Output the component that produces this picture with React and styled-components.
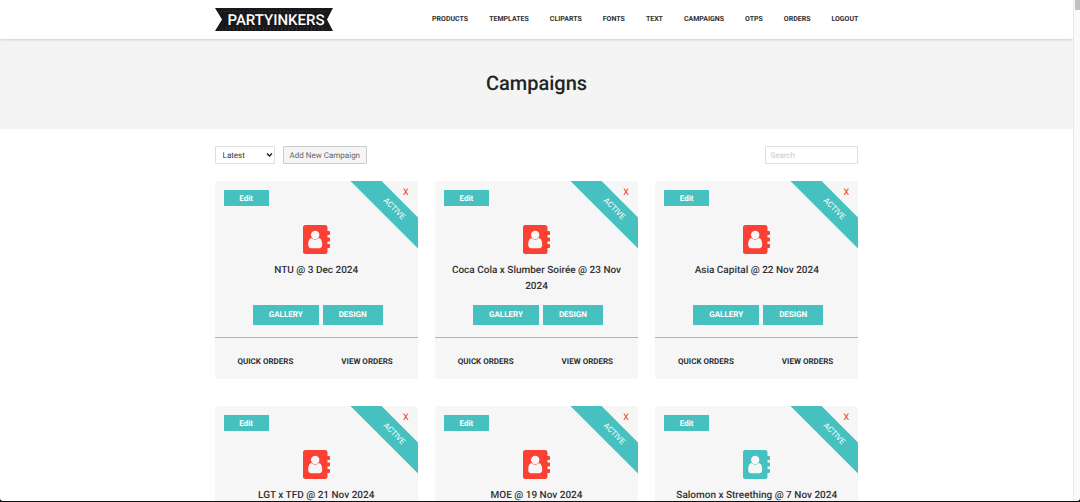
import React from "react";
import styled, {createGlobalStyle} from "styled-components";

const GlobalStyle = createGlobalStyle`
  * {
    box-sizing: border-box;
  }

  body {
    margin: 0;
    background: #111114;
    color: #2f3133;
    font-family: Roboto, Arial, sans-serif;
    font-size: 8px;
    text-rendering: geometricPrecision;
  }

  a {
    color: inherit;
    text-decoration: none;
  }

  button, input, select {
    font-family: inherit;
    font-size: 8px;
    text-rendering: inherit;
  }
`

const StyledWindow = styled.div`
  display: flex;
  height: 100vh;
  border-bottom: 1px solid #111114;
  overflow: hidden;
`

const StyledPage = styled.div`
  flex: 1;
  min-width: 0;
  overflow: hidden;
  background: #fff;
  border-bottom-left-radius: 3px;
`

const StyledTrack = styled.div`
  width: 7px;
  flex: none;
  background: #fafafa;
  border-left: 1px solid #e8e8e8;
  border-bottom-right-radius: 3px;
`

const StyledThumb = styled.div`
  height: 10px;
  margin-left: 1px;
  background: #c1c1c1;
`

const StyledContainer = styled.div`
  width: 60%;
  max-width: 1140px;
  margin: 0 auto;
`

const StyledHeader = styled.header`
  position: relative;
  background: #fff;
  box-shadow: 0 1px 2px rgba(0, 0, 0, 0.15);
`

const StyledBar = styled(StyledContainer)`
  display: flex;
  align-items: center;
  justify-content: space-between;
  height: 39px;
`

const StyledLogo = styled.svg`
  display: block;
  width: 118px;
  height: 23px;
`

const StyledNav = styled.nav`
  display: flex;
  gap: 21px;
  padding-bottom: 1px;
  font-size: 7px;
  font-weight: 700;
  line-height: 12px;
`

const StyledHero = styled.section`
  padding: 29px 0 31px;
  background: #f4f4f4;
`

const StyledTitle = styled.h1`
  margin: 0;
  color: #222426;
  font-size: 20px;
  font-weight: 500;
  line-height: 30px;
  text-align: center;
`

const StyledTools = styled.div`
  display: flex;
  align-items: center;
  gap: 8px;
  margin: 17px 0;
`

const StyledSelectBox = styled.div`
  position: relative;
  width: 60px;

  svg {
    position: absolute;
    top: 6px;
    right: 2px;
    pointer-events: none;
  }
`

const StyledSelect = styled.select`
  display: block;
  width: 100%;
  height: 18px;
  padding: 0 7px;
  appearance: none;
  background: #fff;
  border: 1px solid #ddd;
  border-radius: 1px;
  color: #333;
`

const StyledAdd = styled.button`
  height: 18px;
  padding: 0 6px;
  background: #f5f5f5;
  border: 1px solid #ccc;
  border-radius: 1px;
  color: #666;
`

const StyledSearch = styled.input`
  width: 93px;
  height: 18px;
  margin-left: auto;
  padding: 0 4px;
  border: 1px solid #ddd;
  border-radius: 1px;

  &::placeholder {
    color: #ccc;
  }
`

const StyledGrid = styled.div`
  display: grid;
  grid-template-columns: repeat(3, 1fr);
  gap: 27px 17px;
`

const StyledCard = styled.article`
  position: relative;
  padding-top: 44px;
  overflow: hidden;
  background: #f6f6f6;
  border-radius: 3px;
  text-align: center;
`

const StyledEdit = styled.button`
  position: absolute;
  top: 9px;
  left: 9px;
  width: 45px;
  height: 16px;
  padding: 0;
  background: #46c1c0;
  border: 0;
  color: #fff;
  font-weight: 700;
`

const StyledRibbon = styled.span`
  position: absolute;
  top: 17px;
  right: -36px;
  width: 120px;
  background: #46c1c0;
  color: #fff;
  font-size: 8px;
  line-height: 22px;
  transform: rotate(45deg);
`

const StyledRemove = styled.button`
  position: absolute;
  top: 6px;
  right: 6px;
  width: 12px;
  height: 12px;
  padding: 0;
  background: none;
  border: 0;
  color: #f52f25;
  font-size: 9px;
  line-height: 12px;
`

const StyledBook = styled.svg`
  display: block;
  width: 27px;
  height: 29px;
  margin: 0 auto;
  fill: ${props => props.$color};
`

const StyledName = styled.h2`
  min-height: 32px;
  margin: 9px 12px 10px;
  font-size: 10px;
  font-weight: 500;
  line-height: 16px;
`

const StyledActions = styled.div`
  display: flex;
  justify-content: center;
  gap: 4px;
  margin: 0 0 12px 3px;
`

const StyledAction = styled.a`
  padding: 0 16px;
  background: #46c1c0;
  color: #fff;
  font-weight: 700;
  line-height: 20px;
`

const StyledFooter = styled.footer`
  display: grid;
  grid-template-columns: 1fr 1fr;
  padding: 16px 0 9px;
  border-top: 1px solid #b4b4b4;
  font-weight: 700;
  line-height: 16px;
`

const links = ["PRODUCTS", "TEMPLATES", "CLIPARTS", "FONTS", "TEXT", "CAMPAIGNS", "OTPS", "ORDERS", "LOGOUT"]

const red = "#fb4134"
const teal = "#46c1c0"

const campaigns = [
  {id: 1, name: "NTU @ 3 Dec 2024", color: red},
  {id: 2, name: "Coca Cola x Slumber Soirée @ 23 Nov 2024", color: red},
  {id: 3, name: "Asia Capital @ 22 Nov 2024", color: red},
  {id: 4, name: "LGT x TFD @ 21 Nov 2024", color: red},
  {id: 5, name: "MOE @ 19 Nov 2024", color: red},
  {id: 6, name: "Salomon x Streething @ 7 Nov 2024", color: teal},
]

const Logo = () => (
  <StyledLogo viewBox="0 0 118 23" role="img" aria-label="Partyinkers">
    <path d="M0 0H118L112 11.5L118 23H0L7 11.5Z" fill="#19181b" />
    <path d="M6 3.5H112M11 19.5H108M7 21.5H112" stroke="#77777b" strokeWidth="0.6" strokeDasharray="0.7 3" />
    <text x="61" y="17" textAnchor="middle" fill="#fff" fontFamily="Roboto, sans-serif" fontSize="15" fontWeight="500">PARTYINKERS</text>
  </StyledLogo>
)

const AddressBook = ({color}) => (
  <StyledBook viewBox="0 0 27 29" $color={color} aria-hidden="true">
    <path d="M2.5 0H22a2.5 2.5 0 0 1 2.5 2.5V6h1.7c.5 0 .8.3.8.8v2.4c0 .5-.3.8-.8.8h-1.7v2.5h1.7c.5 0 .8.3.8.8v2.4c0 .5-.3.8-.8.8h-1.7V19h1.7c.5 0 .8.3.8.8v2.4c0 .5-.3.8-.8.8h-1.7v3.5A2.5 2.5 0 0 1 22 29H2.5A2.5 2.5 0 0 1 0 26.5V2.5A2.5 2.5 0 0 1 2.5 0Z" />
    <path d="M8.7 13C6.3 13.2 5.2 16.500 5.200 19.700C5.200 21.800 6.400 23.200 8.200 23.200H16.200C18 23.200 19.200 21.800 19.200 19.700C19.200 16.500 18.100 13.200 15.700 13C14.700 14.200 13.500 14.700 12.200 14.700C10.900 14.700 9.700 14.200 8.700 13Z" fill="#f6f6f6" />
    <circle cx="12.2" cy="10" r="4.200" fill="#f6f6f6" />
  </StyledBook>
)

const Campaign = ({name, color}) => (
  <StyledCard>
    <StyledEdit type="button">Edit</StyledEdit>
    <StyledRibbon>ACTIVE</StyledRibbon>
    <StyledRemove type="button">X</StyledRemove>
    <AddressBook color={color} />
    <StyledName>{name}</StyledName>
    <StyledActions>
      <StyledAction href="#gallery">GALLERY</StyledAction>
      <StyledAction href="#design">DESIGN</StyledAction>
    </StyledActions>
    <StyledFooter>
      <a href="#quick-orders">QUICK ORDERS</a>
      <a href="#view-orders">VIEW ORDERS</a>
    </StyledFooter>
  </StyledCard>
)

const App = () => {
  return (
    <StyledWindow>
      <GlobalStyle />
      <StyledPage>
        <StyledHeader>
          <StyledBar>
            <a href="#home"><Logo /></a>
            <StyledNav>
              {links.map(link => <a key={link} href={`#${link.toLowerCase()}`}>{link}</a>)}
            </StyledNav>
          </StyledBar>
        </StyledHeader>
        <StyledHero>
          <StyledTitle>Campaigns</StyledTitle>
        </StyledHero>
        <StyledContainer as="main">
          <StyledTools>
            <StyledSelectBox>
              <StyledSelect aria-label="Sort campaigns">
                <option>Latest</option>
                <option>Oldest</option>
              </StyledSelect>
              <svg width="7" height="6" viewBox="0 0 7 6" fill="none" stroke="#222" strokeWidth="1.4">
                <path d="M1 1.5L3.5 4L6 1.5" />
              </svg>
            </StyledSelectBox>
            <StyledAdd type="button">Add New Campaign</StyledAdd>
            <StyledSearch type="search" placeholder="Search" aria-label="Search campaigns" />
          </StyledTools>
          <StyledGrid>
            {campaigns.map(campaign => <Campaign key={campaign.id} {...campaign} />)}
          </StyledGrid>
        </StyledContainer>
      </StyledPage>
      <StyledTrack>
        <StyledThumb />
      </StyledTrack>
    </StyledWindow>
  )
}

export default App
